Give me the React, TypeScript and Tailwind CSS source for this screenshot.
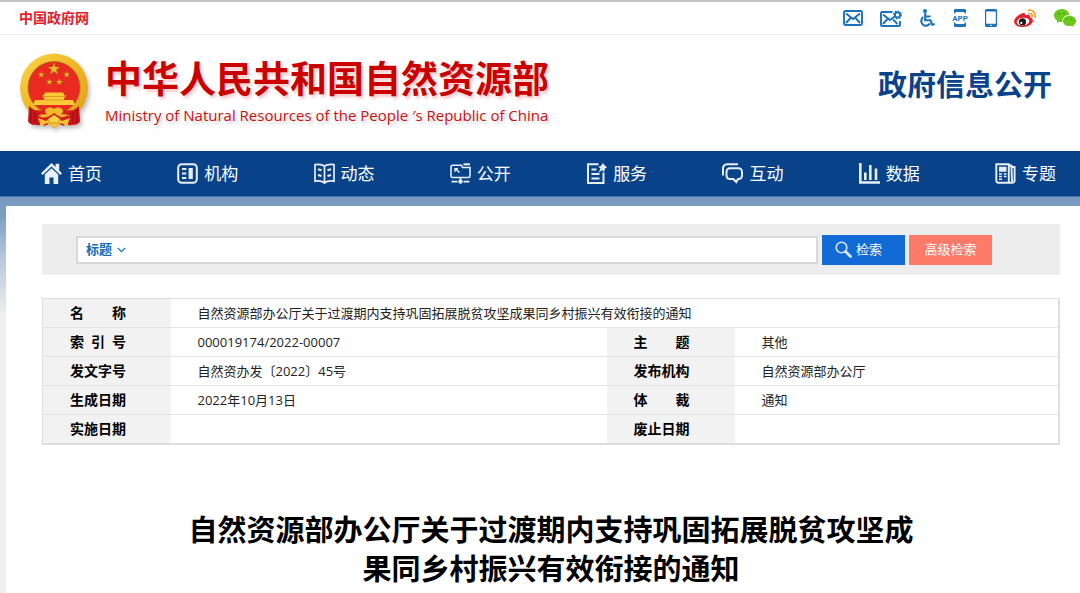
import type { ReactNode } from "react";

const navItems: { label: string; icon: ReactNode }[] = [
  {
    label: "首页",
    icon: (
      <>
        <path d="M10.500 0 0 10.200l1.700 1.700 8.800-8.500 8.800 8.500 1.700-1.700-2.800-2.700V.800h-3.600v3.100z" fill="currentColor" stroke="none" />
        <path d="M10.500 5.200 3.800 11.600V21h4.700v-6.600h4V21h4.700v-9.400z" fill="currentColor" stroke="none" />
      </>
    ),
  },
  {
    label: "机构",
    icon: (
      <>
        <rect x="1.200" y="1.200" width="18.600" height="18.600" rx="3.500" />
        <rect x="11.600" y="5" width="4.200" height="11" fill="currentColor" stroke="none" />
        <path d="M5 6h4.300M5 10.500h4.300M5 15h4.300" />
      </>
    ),
  },
  {
    label: "动态",
    icon: (
      <>
        <path d="M10.500 3.200C8 1 4.500 1 1 1.600v16.600c3.500-.6 7-.4 9.500 1.800 2.500-2.200 6-2.400 9.500-1.800V1.600c-3.500-.6-7-.6-9.500 1.600zM10.500 3.200V20" strokeWidth="1.700" />
        <path d="m4 6.200 3.500 1M4 12l3.500 1M17 6.200l-3.500 1M17 12l-3.500 1" strokeWidth="2" />
      </>
    ),
  },
  {
    label: "公开",
    icon: (
      <>
        <path d="M11.500 2.200H2.500A1.500 1.500 0 0 0 1 3.700V13a1.500 1.500 0 0 0 1.500 1.500h16A1.500 1.500 0 0 0 20 13V4.500h-7.500z" strokeWidth="1.600" />
        <path d="M13.500 1.300h6.500" strokeWidth="2" />
        <path d="M4.500 5.800h3.500M5 5.500v3.300M6 6.300l3.500 3.200" strokeWidth="1.500" />
        <path d="M10.500 14.500v3M1.500 18.600h6M13.500 18.600h6" strokeWidth="1.800" />
        <circle cx="10.500" cy="18.600" r="2.200" fill="currentColor" stroke="none" />
      </>
    ),
  },
  {
    label: "服务",
    icon: (
      <>
        <path d="M12.500 1.300H2V20h15.500V9.500" />
        <path d="M5.500 6.500h5M5.500 11h8M5.500 15.500h8" strokeWidth="1.900" />
        <path d="m16.500 0 4.500 4.500-2 1-1 3.500-2-2-3.700 3.200 2.200-4.700-2-1.700 3.300-1.500z" fill="currentColor" stroke="none" />
      </>
    ),
  },
  {
    label: "互动",
    icon: (
      <>
        <path d="M1 12.500V5.500A4 4 0 0 1 5 1.300h11" />
        <path d="M8 5.200h8.500a3.500 3.500 0 0 1 3.500 3.500v4a3.500 3.500 0 0 1-3.500 3.300H16l-1.700 3-3-3H8a3.500 3.500 0 0 1-3.500-3.300v-4A3.500 3.500 0 0 1 8 5.200z" />
      </>
    ),
  },
  {
    label: "数据",
    icon: <path d="M1.300 0v19.500H22M6.300 9.500v7.500M11.300 2v15M17 5.500V17" strokeWidth="2.600" />,
  },
  {
    label: "专题",
    icon: (
      <>
        <path d="M1.300 1.200h12.500v18.500H3.500a2.200 2.200 0 0 1-2.200-2.200zM13.800 2.500h2.600l.6 16M17 4h2.600v13.200a2.500 2.500 0 0 1-2.500 2.500H3.500" strokeWidth="1.900" />
        <path d="M4 5h7.500M4 7.500h7.500" strokeWidth="2.300" />
        <path d="M4 11h3M8.800 11h2.700M4 13.500h3M8.800 13.500h2.700M4 16.300h3" strokeWidth="1.400" />
      </>
    ),
  },
];

const rows = [
  [{ label: "索\u2002引\u2002号", value: "000019174/2022-00007" }, { label: "主　　题", value: "其他" }],
  [{ label: "发文字号", value: "自然资办发〔2022〕45号" }, { label: "发布机构", value: "自然资源部办公厅" }],
  [{ label: "生成日期", value: "2022年10月13日" }, { label: "体　　裁", value: "通知" }],
  [{ label: "实施日期", value: "" }, { label: "废止日期", value: "" }],
];

const STAR = "M0-1 .225-.309H.951L.363.118.588.809 0 .382-.588.809-.363.118-.951-.309H-.225z";

function Emblem() {
  return (
    <svg width="70" height="76" viewBox="0 0 70 76" className="shrink-0 drop-shadow-[2px_3px_2px_rgba(0,0,0,0.25)]" aria-hidden="true">
      <defs>
        <linearGradient id="gold" x1="0" y1="0" x2="1" y2="1">
          <stop offset="0" stopColor="#fbd648" />
          <stop offset="0.5" stopColor="#efb524" />
          <stop offset="1" stopColor="#dda01b" />
        </linearGradient>
      </defs>
      <ellipse cx="34" cy="35" rx="34" ry="34.500" fill="url(#gold)" />
      <circle cx="34" cy="34.500" r="26" fill="#e82a20" stroke="#a96b12" strokeWidth=".7" />
      <g fill="#f0bd2c" stroke="#a8741a" strokeWidth=".08">
        <path d={STAR} transform="translate(34 16) scale(6.500)" />
        <path d={STAR} transform="translate(21.300 21.700) scale(3.500)" />
        <path d={STAR} transform="translate(46.700 21.700) scale(3.500)" />
        <path d={STAR} transform="translate(29.300 29) scale(3.500)" />
        <path d={STAR} transform="translate(39.300 29) scale(3.500)" />
      </g>
      <path d="M25 39.500h18l1.500 3H46l-2 3v1.500h9l2 5H13l2-5h9v-1.500l-2-3h1.500z" fill="#f7c936" />
      <path d="M23 43.500h22M24 47h20" stroke="#d08b1c" strokeWidth=".7" />
      <path d="M9 53c4 4 8 5 12 7l-1 12c-3 1-5-1-7 0l-4-2-1-2z" fill="#c9151b" />
      <path d="M59 53c-4 4-8 5-12 7l1 12c3 1 5-1 7 0l4-2 1-2z" fill="#c9151b" />
      <path d="M11 56v14M15 59v11M57 56v14M53 59v11" stroke="#8f0d12" strokeWidth=".9" />
      <path d="M15 57c7 1 12 0 15-1.500l4 1.500 4-1.500c3 1.500 8 2.500 15 1.500-3 3-6 5-10 5l-9 4-9-4c-4 0-7-2-10-5z" fill="#d81d1c" />
      <path d="M26 56c3-2 5-2 8 0 3-2 5-2 8 0 2 2 1 4-1 5 4 1 7 0 9 2l-5 1c-4 0-7-1-11-4-4 3-7 4-11 4l-5-1c2-2 5-1 9-2-2-1-3-3-1-5z" fill="#f0b92b" />
      <path d="M20 64c5 1 9 1 14-3 5 4 9 4 14 1v6l-4 5-5-2-5 4-5-4-5 2-4-5z" fill="#d81d1c" />
      <path d="m18 65 8 3 8-6 8 6 8-3-3 8-6-3-7 5-7-5-6 3z" fill="#f4c531" />
      <path d="m28 66 6-4 6 4-2 4h-8z" fill="#f7d24a" stroke="#bf7f1a" strokeWidth=".7" />
    </svg>
  );
}

function TopBar() {
  return (
    <div className="flex h-[33px] items-center justify-between border-b border-[#eeeeee] pl-[19px] pr-1">
      <a href="#" className="text-sm font-bold text-[#e0202c]">
        中国政府网
      </a>
      <div className="flex items-center gap-[17px] text-[#1a72b8]">
        <a href="#" aria-label="邮箱">
          <svg width="20" height="16" viewBox="0 0 20 16" fill="none" stroke="currentColor" strokeWidth="1.900">
            <rect x="1" y="1" width="18" height="14" rx="1.500" />
            <path d="m3 3.500 7 5.500 7-5.500M3 13l4.500-5M17 13l-4.500-5" />
          </svg>
        </a>
        <a href="#" aria-label="邮件设置">
          <svg width="22" height="17" viewBox="0 0 22 17" fill="none" stroke="currentColor" strokeWidth="1.900">
            <path d="M12.500 2H2a1 1 0 0 0-1 1v12a1 1 0 0 0 1 1h17a1 1 0 0 0 1-1v-4" />
            <path d="m3 4.500 7 5.500 4-3M3 14l4.500-5M17.500 14 13 9.500" />
            <circle cx="17.500" cy="4.900" r="2.600" />
            <circle cx="17.500" cy="4.900" r="3.900" strokeWidth="1.300" strokeDasharray="1.530 1.530" />
          </svg>
        </a>
        <a href="#" aria-label="无障碍">
          <svg width="16" height="18" viewBox="0 0 16 18" fill="none" stroke="currentColor" strokeWidth="2.100">
            <circle cx="6" cy="2" r="2" fill="currentColor" stroke="none" />
            <path d="M6.200 4v7.200h5.300l1.700 4.500 2.500-.8M6 7.500h5.500" />
            <path d="M4.200 8.200a4.700 4.700 0 1 0 6.800 6.200" />
          </svg>
        </a>
        <a href="#" aria-label="移动应用">
          <svg width="16" height="18" viewBox="0 0 16 18" fill="currentColor">
            <path d="M3 0h10a1 1 0 0 1 1 1v3.500h-1.500V3h-9v1.500H2V1a1 1 0 0 1 1-1zM2 13.500h1.500V15h9v-1.500H14V17a1 1 0 0 1-1 1H3a1 1 0 0 1-1-1z" />
            <text x="8" y="12" textAnchor="middle" fontSize="8" fontWeight="700" fontFamily="Roboto, sans-serif">
              APP
            </text>
          </svg>
        </a>
        <a href="#" aria-label="手机版">
          <svg width="12" height="18" viewBox="0 0 12 18">
            <path fill="currentColor" fillRule="evenodd" d="M1.500 0h9A1.500 1.500 0 0 1 12 1.500v15a1.500 1.500 0 0 1-1.500 1.500h-9A1.500 1.500 0 0 1 0 16.500v-15A1.500 1.500 0 0 1 1.500 0zM1.200 2.500v12.300h9.600V2.500z" />
            <path d="M5 16.400h2" stroke="#fff" strokeWidth=".9" />
          </svg>
        </a>
        <a href="#" aria-label="微博">
          <svg width="23" height="19" viewBox="0 0 23 19">
            <path fill="#e6202a" d="M8.500 4.200c1.800-.8 3 .1 2.500 2 2.600-.9 5.600-.8 5 2 3.300 1 3.800 4.200 1.500 6.600-2.500 2.700-6.700 3.700-10.500 3.200C2.500 17.500-.4 15 .2 11.700.8 9 4.700 5.300 8.500 4.200z" />
            <ellipse cx="9" cy="12.700" rx="6.300" ry="3.900" transform="rotate(-8 9 12.700)" fill="#fff" />
            <circle cx="8.500" cy="12.900" r="3.600" fill="#1c1c1c" />
            <circle cx="7.300" cy="13.900" r="1.100" fill="#fff" />
            <path d="M14.500 1.400c4-1 7.500 2.500 6.600 7M15 4.700c2.200-.6 3.600 1 3 3.100" fill="none" stroke="#f6a12c" strokeWidth="1.800" strokeLinecap="round" />
          </svg>
        </a>
        <a href="#" aria-label="微信">
          <svg width="22" height="18" viewBox="0 0 22 18">
            <path fill="#6cc81a" d="M7.700 0C12 0 15 2.500 15.400 6c-4.500 0-7.400 2.800-6.900 7-1.300.1-2.200 0-3.200-.3L2.500 14.300l.8-2.600C1.200 10.300 0 8.500 0 6.400 0 2.800 3.500 0 7.700 0z" />
            <path fill="#6cc81a" d="M15.500 6.700c3.700 0 6.500 2.300 6.500 5.200 0 1.700-.9 3.100-2.400 4.100l.6 2-2.200-1.200c-.8.2-1.600.3-2.500.3-3.700 0-6.500-2.300-6.500-5.200s2.800-5.200 6.500-5.200z" />
            <g fill="#3f8a10">
              <circle cx="5" cy="4.600" r=".9" />
              <circle cx="10" cy="4.600" r=".9" />
              <circle cx="13.300" cy="10.300" r=".7" />
              <circle cx="17.600" cy="10.300" r=".7" />
            </g>
          </svg>
        </a>
      </div>
    </div>
  );
}

function Header() {
  return (
    <header className="flex h-[116px] items-center justify-between pl-5 pr-7">
      <div className="flex items-center gap-[15px] pb-1">
        <Emblem />
        <div>
          <h1 className="text-[37px] leading-[48px] font-bold text-[#cb0000] [text-shadow:2px_3px_3px_rgba(200,0,0,0.2)]">
            中华人民共和国自然资源部
          </h1>
          <p className="text-[15px] leading-6 text-[#cb1010] [text-shadow:2px_3px_3px_rgba(0,0,0,0.2)]">
            Ministry of Natural Resources of the People ′s Republic of China
          </p>
        </div>
      </div>
      <p className="pb-4 text-[29px] leading-10 font-bold text-[#09418a]">政府信息公开</p>
    </header>
  );
}

function SearchBar() {
  return (
    <form className="flex h-[51px] items-center gap-1 bg-[#ededed] pl-[34px] pr-[68px]" onSubmit={(e) => e.preventDefault()}>
      <div className="flex h-7 flex-1 items-center border-2 border-[#d8d8d8] bg-white pl-2">
        <div className="relative flex items-center">
          <select aria-label="检索范围" className="w-10 appearance-none bg-transparent text-[13px] font-bold text-[#146cb9] outline-none">
            <option>标题</option>
          </select>
          <svg width="9" height="6" viewBox="0 0 9 6" className="pointer-events-none absolute right-0" fill="none" stroke="#1a72b8" strokeWidth="1.300">
            <path d="m.7.900 3.800 3.800L8.300.900" />
          </svg>
        </div>
        <input type="text" aria-label="检索内容" className="ml-2 h-full flex-1 text-[13px] outline-none" />
      </div>
      <button type="submit" className="flex h-[30px] w-[83px] items-center gap-1 bg-[#126ad6] pl-[13px] text-[13px] text-white">
        <svg width="17" height="17" viewBox="0 0 17 17" fill="none" stroke="#d9e8fb">
          <circle cx="6.500" cy="6.500" r="5.300" strokeWidth="1.600" />
          <path d="m10.500 10.500 5 5" strokeWidth="2.800" strokeLinecap="round" />
        </svg>
        检索
      </button>
      <button type="button" className="h-[30px] w-[83px] bg-[#fd7a68] text-[13px] text-white">
        高级检索
      </button>
    </form>
  );
}

function InfoTable() {
  const th = "bg-[#f2f2f2] pl-[27px] text-left text-sm leading-7 font-bold whitespace-pre text-black";
  const td = "pl-[27px] text-[13px] leading-7 text-[#222222]";
  return (
    <table className="mt-[23px] w-full table-fixed border-collapse border border-r-2 border-b-2 border-[#dedede]">
      <colgroup>
        <col className="w-[128px]" />
        <col className="w-[436px]" />
        <col className="w-[128px]" />
        <col />
      </colgroup>
      <tbody>
        <tr className="h-[29px] border-b border-[#e4e4e4]">
          <th scope="row" className={th}>名　　称</th>
          <td colSpan={3} className={td}>
            自然资源部办公厅关于过渡期内支持巩固拓展脱贫攻坚成果同乡村振兴有效衔接的通知
          </td>
        </tr>
        {rows.map(([left, right]) => (
          <tr key={left.label} className="h-[29px] border-b border-[#e4e4e4]">
            <th scope="row" className={th}>{left.label}</th>
            <td className={td}>{left.value}</td>
            <th scope="row" className={th}>{right.label}</th>
            <td className={td}>{right.value}</td>
          </tr>
        ))}
      </tbody>
    </table>
  );
}

export default function App() {
  return (
    <div className="flex min-h-screen flex-col bg-white font-['Open_Sans','Noto_Sans_CJK_SC',sans-serif]">
      <div className="border-t-2 border-[#c4c4c4]" />
      <TopBar />
      <Header />
      <nav className="flex h-[45px] items-center justify-between bg-[#08438a] pl-[41px] pr-6 text-[17px] text-white">
        {navItems.map((item) => (
          <a key={item.label} href="#" className="flex items-center gap-[6px]">
            <svg width="21" height="21" viewBox="0 0 21 21" fill="none" stroke="currentColor" strokeWidth="2" className="text-[#e8eef6]" aria-hidden="true">
              {item.icon}
            </svg>
            {item.label}
          </a>
        ))}
      </nav>
      <div className="flex flex-1 flex-col border-t border-[#4a78ae] bg-[linear-gradient(to_bottom,#7799c0_0px,#7d9fc6_20px,#b5c7dc_60px,#f0f0f0_120px)] pt-[9px] pl-[6px]">
        <main className="flex-1 bg-white pt-[18px] pr-5 pl-9">
          <SearchBar />
          <InfoTable />
          <h2 className="mx-auto mt-[65px] max-w-[740px] text-center text-[29px] leading-[39px] font-bold text-black">
            自然资源部办公厅关于过渡期内支持巩固拓展脱贫攻坚成果同乡村振兴有效衔接的通知
          </h2>
        </main>
      </div>
    </div>
  );
}
